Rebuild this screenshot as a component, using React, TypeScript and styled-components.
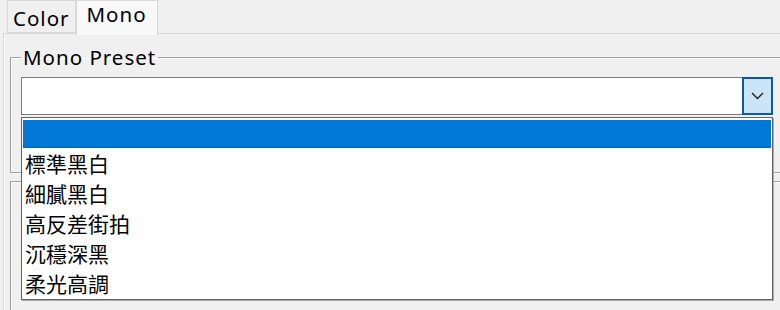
import React from "react";
import styled, { createGlobalStyle } from "styled-components";

const GlobalStyle = createGlobalStyle`
  html, body {
    margin: 0;
    padding: 0;
    background: #f0f0f0;
    overflow: hidden;
  }
  body {
    font-family: "Noto Sans", "Noto Sans CJK TC", sans-serif;
  }
`;

const Window = styled.div`
  width: 784px;
  height: 310px;
  overflow: hidden;
  background: #f0f0f0;
  color: #000;
  font-family: "Noto Sans", "Noto Sans CJK TC", sans-serif;
  font-size: 20.5px;
  letter-spacing: 1px;
`;

const TabStrip = styled.div`
  display: flex;
  align-items: flex-end;
  height: 33px;
  padding-left: 7px;
  position: relative;
  z-index: 1;
`;

const Tab = styled.div<{ $selected?: boolean }>`
  box-sizing: border-box;
  display: flex;
  align-items: ${(p) => (p.$selected ? "flex-start" : "center")};
  height: ${(p) => (p.$selected ? "35px" : "33px")};
  margin-bottom: ${(p) => (p.$selected ? "-2px" : "0")};
  padding: ${(p) => (p.$selected ? "0 10px 0 10px" : "2px 5px 0 5px")};
  background: ${(p) => (p.$selected ? "#f9f9f9" : "#f0f0f0")};
  border: 1px solid #d9d9d9;
  border-bottom: ${(p) => (p.$selected ? "none" : "1px solid #d9d9d9")};
  line-height: 26px;
  white-space: nowrap;
`;

const TabPanel = styled.div`
  margin-left: 3px;
  border-top: 1px solid #d9d9d9;
  border-left: 1px solid #d9d9d9;
  box-shadow: inset 1px 0 0 #fdfdfd;
  background: #f0f0f0;
  padding: 11px 0 0 6px;
  height: 300px;
  display: flex;
  flex-direction: column;
  gap: 8px;
`;

const GroupBox = styled.fieldset<{ $tall?: boolean }>`
  margin: 0;
  padding: 8px 10px 57px 10px;
  min-width: 0;
  border: 1px solid #a0a0a0;
  box-shadow: inset 1px 1px 0 #ffffff, 1px 1px 0 #ffffff;
  flex: ${(p) => (p.$tall ? "1 1 auto" : "0 0 auto")};
`;

const Legend = styled.legend`
  padding: 0 2px 0 2px;
  margin-left: 0;
  line-height: 24px;
`;

const ComboWrap = styled.div`
  position: relative;
`;

const ComboBox = styled.div`
  box-sizing: border-box;
  display: flex;
  height: 38px;
  border: 1px solid #7a7a7a;
  background: #ffffff;
`;

const ComboField = styled.div`
  flex: 1 1 auto;
`;

const DropButton = styled.div`
  box-sizing: border-box;
  width: 31px;
  margin: -1px -1px -1px 0;
  background: #cce4f7;
  border: 2px solid #0a58a8;
  display: flex;
  align-items: center;
  justify-content: center;
`;

const DropList = styled.div`
  position: absolute;
  left: 0;
  right: 0;
  top: calc(100% + 2px);
  box-sizing: border-box;
  background: #ffffff;
  border: 1px solid #646464;
  box-shadow: 1px 1px 0 #a8a8a8;
  padding: 2px 1px 1px 1px;
  font-family: "Noto Sans CJK TC", "Noto Sans", sans-serif;
  font-size: 21px;
  letter-spacing: 0;
`;

const Item = styled.div<{ $selected?: boolean }>`
  box-sizing: border-box;
  height: ${(p) => (p.$selected ? "28px" : "30px")};
  line-height: ${(p) => (p.$selected ? "28px" : "30px")};
  padding-left: 2px;
  background: ${(p) => (p.$selected ? "#0078d7" : "transparent")};
  border-bottom: ${(p) => (p.$selected ? "1px solid #0064c0" : "none")};
  color: ${(p) => (p.$selected ? "#fff" : "#000")};
  white-space: nowrap;
`;

const Chevron = () => (
  <svg width="13" height="8" viewBox="0 0 13 8">
    <path d="M1 1 L6.5 6.5 L12 1" fill="none" stroke="#1f1f1f" strokeWidth="1.4" />
  </svg>
);

const items = ["", "標準黑白", "細膩黑白", "高反差街拍", "沉穩深黑", "柔光高調"];

export default function App() {
  return (
    <>
      <GlobalStyle />
      <Window>
        <TabStrip>
          <Tab>Color</Tab>
          <Tab $selected>Mono</Tab>
        </TabStrip>
        <TabPanel>
          <GroupBox>
            <Legend>Mono Preset</Legend>
            <ComboWrap>
              <ComboBox>
                <ComboField />
                <DropButton>
                  <Chevron />
                </DropButton>
              </ComboBox>
              <DropList>
                {items.map((t, i) => (
                  <Item key={i} $selected={i === 0}>
                    {t}
                  </Item>
                ))}
              </DropList>
            </ComboWrap>
          </GroupBox>
          <GroupBox $tall />
        </TabPanel>
      </Window>
    </>
  );
}
